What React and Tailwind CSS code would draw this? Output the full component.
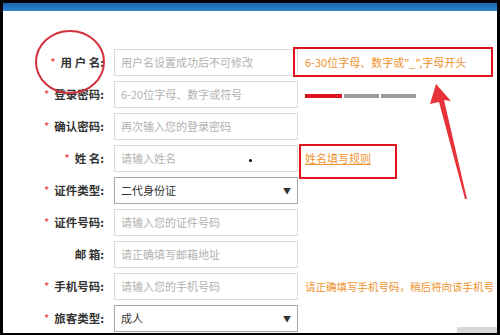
import React from 'react';

const rows = [
  { label: '用 户 名:', req: true, ph: '用户名设置成功后不可修改' },
  { label: '登录密码:', req: true, ph: '6-20位字母、数字或符号', extra: 'strength' },
  { label: '确认密码:', req: true, ph: '再次输入您的登录密码' },
  { label: '姓 名:', req: true, ph: '请输入姓名', extra: 'namerule' },
  { label: '证件类型:', req: true, value: '二代身份证', select: true },
  { label: '证件号码:', req: true, ph: '请输入您的证件号码' },
  { label: '邮 箱:', req: false, ph: '请正确填写邮箱地址' },
  { label: '手机号码:', req: true, ph: '请输入您的手机号码', extra: 'phone' },
  { label: '旅客类型:', req: true, value: '成人', select: true },
];

function Extra({ kind }) {
  if (kind === 'strength') {
    return (
      <div className="flex shrink-0 gap-[2px] ml-[7px] mt-[3px]">
        <div className="w-[37px] h-[4px] bg-[#e0141e]" />
        <div className="w-[35px] h-[4px] bg-[#9a9a9a]" />
        <div className="w-[35px] h-[4px] bg-[#9a9a9a]" />
      </div>
    );
  }
  if (kind === 'namerule') {
    return <span className="ml-[7px] shrink-0 text-[11px] text-[#f0922e] underline">姓名填写规则</span>;
  }
  if (kind === 'phone') {
    return <span className="ml-[7px] shrink-0 text-[10.5px] text-[#f0922e] whitespace-nowrap">请正确填写手机号码，稍后将向该手机号</span>;
  }
  return null;
}

export default function App() {
  return (
    <div
      className="relative w-[500px] h-[335px] overflow-hidden bg-white border-l-[3px] border-t-[3px] border-b-[2px] border-r-[3px] border-black"
      style={{ fontFamily: '"Noto Sans CJK SC", "Liberation Sans", sans-serif' }}
    >
      <div className="h-[8px] bg-gradient-to-b from-[#1a64b0] to-[#2f86cf]" />
      <div className="flex flex-col gap-[5px] pt-[38px]">
        {rows.map((r, i) => (
          <div key={i} className="flex items-center h-[27px] overflow-hidden">
            <div className="w-[101px] shrink-0 flex justify-end items-center text-[11.5px] font-bold text-[#333] whitespace-pre">
              {r.req && <span className="text-[#e8323a] font-normal mr-[5px]">*</span>}
              {r.label}
            </div>
            <div
              className={`ml-[10px] shrink-0 w-[184px] h-[27px] flex items-center justify-between px-[6px] border text-[11px] bg-white ${
                r.select ? 'border-[#a8a8a8] text-[#333]' : 'border-[#dadada] text-[#b2b2b2]'
              }`}
            >
              <span className="whitespace-nowrap">{r.select ? r.value : r.ph}</span>
              {r.select && <span className="text-[8px] text-[#333]">▼</span>}
            </div>
            {r.extra && <Extra kind={r.extra} />}
            {i === 0 && (
              <span className="ml-[7px] shrink-0 text-[11px] text-[#f0922e] whitespace-nowrap">6-30位字母、数字或"_",字母开头</span>
            )}
          </div>
        ))}
      </div>

      {/* annotations */}
      <div className="absolute left-[290px] top-[44px] w-[200px] h-[30px] border-[2px] border-[#e0141e]" />
      <div className="absolute left-[296px] top-[141px] w-[98px] h-[35px] border-[2px] border-[#e0141e]" />
      <div className="absolute left-[246px] top-[156px] w-[3px] h-[3px] rounded-full bg-black" />
      <div className="absolute right-0 bottom-0 w-[40px] h-[6px] bg-[#d8d8d8]" />
      <svg className="absolute left-[-3px] top-[-3px]" width="500" height="335" viewBox="0 0 500 335">
        <ellipse cx="70" cy="62" rx="34" ry="31" fill="none" stroke="#d3323c" strokeWidth="2" />
        <polygon points="436,84 451,101 444,100 467,199 465,199 439,102 430,104" fill="#e8323a" />
      </svg>
    </div>
  );
}
